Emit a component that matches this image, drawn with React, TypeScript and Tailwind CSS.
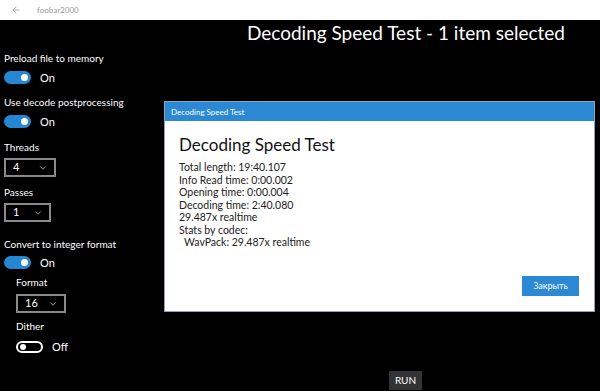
import { ArrowLeft, ChevronDown } from "lucide-react";

// Windows-10 style settings page with a modal result dialog on top.

const font = { fontFamily: 'Lato, "Noto Sans", sans-serif' };

function Toggle({ on }: { on: boolean }) {
  return on ? (
    <span className="flex h-[13px] w-[27px] items-center justify-end rounded-full bg-[#2587d4] pr-[3px]">
      <span className="h-[7px] w-[7px] rounded-full bg-white" />
    </span>
  ) : (
    <span className="flex h-[12px] w-[27px] items-center rounded-full border-2 border-white pl-[2px]">
      <span className="h-[6px] w-[6px] rounded-full bg-white" />
    </span>
  );
}

function ToggleRow({ on }: { on: boolean }) {
  return (
    <div className="flex items-center gap-[9px]">
      <Toggle on={on} />
      <span className="text-[11px] leading-[13px] text-white">{on ? "On" : "Off"}</span>
    </div>
  );
}

function Select({ value, width }: { value: string; width: string }) {
  return (
    <div className={`flex h-[19px] items-center justify-between border-2 border-[#8a8a8a] pl-[7px] pr-[5px] ${width}`}>
      <span className="text-[11px] text-white">{value}</span>
      <ChevronDown className="h-[10px] w-[12px] text-white" strokeWidth={1.5} />
    </div>
  );
}

function Label({ children }: { children: string }) {
  return <p className="text-[10px] leading-[14px] text-white">{children}</p>;
}

export default function App() {
  return (
    <div className="flex h-[391px] w-[600px] flex-col overflow-hidden bg-black" style={font}>
      {/* title bar */}
      <div className="flex h-[20px] shrink-0 items-center bg-white">
        <ArrowLeft className="ml-[11px] h-[10px] w-[10px] text-[#777]" strokeWidth={1.5} />
        <span className="ml-[16px] text-[8px] text-[#999]">foobar2000</span>
      </div>

      <div className="relative flex-1">
        <h1 className="mr-[35px] mt-[1px] text-right text-[19px] leading-[24px] text-white">
          Decoding Speed Test - 1 item selected
        </h1>

        <div className="mt-[6px] flex flex-col pl-[4px]">
          <Label>Preload file to memory</Label>
          <div className="mt-[6px]"><ToggleRow on /></div>

          <div className="mt-[11px]"><Label>Use decode postprocessing</Label></div>
          <div className="mt-[6px]"><ToggleRow on /></div>

          <div className="mt-[12px]"><Label>Threads</Label></div>
          <div className="mt-[4px]"><Select value="4" width="w-[52px]" /></div>

          <div className="mt-[8px]"><Label>Passes</Label></div>
          <div className="mt-[4px]"><Select value="1" width="w-[47px]" /></div>

          <div className="mt-[15px]"><Label>Convert to integer format</Label></div>
          <div className="mt-[5px]"><ToggleRow on /></div>

          <div className="mt-[6px] flex flex-col pl-[12px]">
            <Label>Format</Label>
            <div className="mt-[5px]"><Select value="16" width="w-[50px]" /></div>
            <div className="mt-[6px]"><Label>Dither</Label></div>
            <div className="mt-[7px]"><ToggleRow on={false} /></div>
          </div>
        </div>

        <div className="mt-[18px] flex pl-[389px]">
          <button className="h-[19px] w-[33px] bg-[#333] text-[10px] text-white">RUN</button>
        </div>

        {/* modal dialog */}
        <div className="absolute left-[164px] top-[81px] flex h-[211px] w-[431px] flex-col border border-[#8aa4bf] bg-white">
          <div className="flex h-[19px] items-center bg-[#2b88d3] pl-[6px] text-[8px] text-white">
            Decoding Speed Test
          </div>
          <div className="flex flex-1 flex-col px-[14px] pt-[12px]">
            <h2 className="text-[17px] leading-[24px] text-[#111]">Decoding Speed Test</h2>
            <div className="mt-[4px] text-[10.5px] leading-[12.5px] text-[#222]">
              <p>Total length: 19:40.107</p>
              <p>Info Read time: 0:00.002</p>
              <p>Opening time: 0:00.004</p>
              <p>Decoding time: 2:40.080</p>
              <p>29.487x realtime</p>
              <p>Stats by codec:</p>
              <p className="pl-[5px]">WavPack: 29.487x realtime</p>
            </div>
            <div className="mt-auto mb-[15px] flex justify-end">
              <button className="mr-[1px] h-[20px] w-[57px] bg-[#2b88d3] text-[9px] text-white">Закрыть</button>
            </div>
          </div>
        </div>
      </div>
    </div>
  );
}
